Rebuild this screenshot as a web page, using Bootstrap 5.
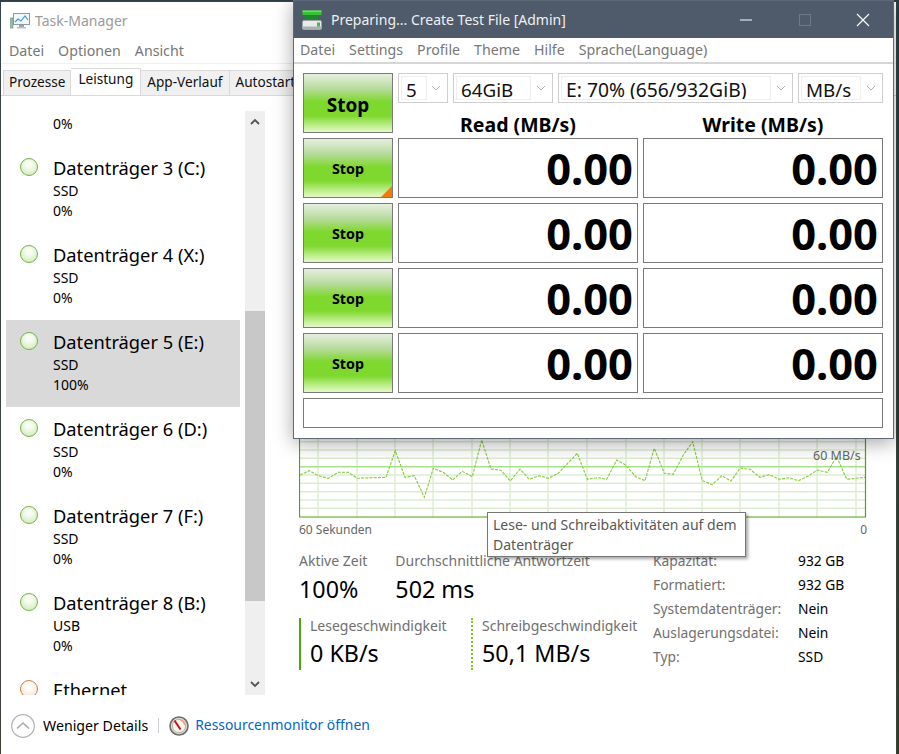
<!DOCTYPE html>
<html lang="de">
<head>
<meta charset="utf-8">
<title>Task-Manager</title>
<link href="https://cdn.jsdelivr.net/npm/bootstrap@5.3.0/dist/css/bootstrap.min.css" rel="stylesheet">
<style>
html,body{margin:0;height:100%;overflow:hidden}
body{font-family:"Noto Sans","Open Sans","Liberation Sans",sans-serif;font-size:14px;color:#000;background:#2b3a3c}
.desk{position:relative;width:899px;height:754px;overflow:hidden;background:linear-gradient(#2c3e44,#333a2c)}
.tm{position:absolute;left:1px;top:2px;width:895px;height:752px;background:#fff;display:flex;flex-direction:column;box-shadow:0 0 2px #555}
.tm-title{height:37px;flex:none;padding-left:9px;gap:4px;color:#9a9a9a;font-size:14px}
.tm-menu{height:24px;flex:none;padding-left:8px;gap:14px;color:#777;font-size:14.2px}
.tabbar{height:33px;flex:none;padding:3px 0 0 2px;border-top:1px solid #f0f0f0;border-bottom:1px solid #d9d9d9;background:#fff;align-items:flex-end;overflow:hidden}
.tabx{height:25px;background:#f0f0f0;border:1px solid #d9d9d9;border-bottom:0;border-left:0;padding:0 5px;line-height:22px;font-size:13.6px;white-space:nowrap;color:#111}
.tabx.first{border-left:1px solid #d9d9d9}
.tabx.on{height:28px;background:#fff;line-height:20px;padding:0 7px;margin-bottom:-1px;position:relative;border-left:0}
.tabx.wider{padding:0 7px 0 6px}
.mainrow{flex:1;min-height:0}
.side{width:265px;padding-top:15px;flex:none;display:flex}
.sidelist{width:244px;height:584px;overflow:hidden;flex:none;padding-left:5px}
.sidein{margin-top:-52px}
.disk{width:234px;height:87px;padding:10px 0 0 14px;display:flex;gap:15px}
.disk.sel{background:#d9d9d9}
.dot{width:18px;height:18px;border-radius:50%;flex:none;border:1.7px solid #74b44a;background:radial-gradient(circle at 50% 35%,#f8fdf4 20%,#c8e6ae 100%);margin-top:2px}
.dot.eth{border-color:#c9824f;background:radial-gradient(circle at 50% 35%,#fff 20%,#f9d9bf 100%)}
.dname{font-size:18.3px;line-height:25px;white-space:nowrap;margin:-1px 0 1px}
.dsub{font-size:14px;line-height:20px}
.scroll{width:20px;height:584px;background:#efefef;position:relative;flex:none}
.thumb{position:absolute;left:0;right:0;top:200px;height:290px;background:#c8c8c8}
.sarrow{position:absolute;left:5px;width:10px;height:8px}
.panel{flex:1;padding:334px 0 0 33px;min-width:0;position:relative}
.graph{display:block;width:568px;height:88px}
.gmax{position:absolute;left:547px;top:352px;font-size:12.5px;color:#666;line-height:16px}
.gaxis{width:568px;height:23px;font-size:12px;color:#666;padding-top:4px;line-height:16px}
.stats{width:568px;gap:0;margin-top:10px}
.lbl{font-size:14px;line-height:20px;color:#707070;white-space:nowrap}
.val{font-size:23.3px;line-height:35px;white-space:nowrap;color:#000}
.leftstats{width:354px}
.topstat{height:67px;gap:28px}
.topstat .val{margin-top:1px}
.speed{height:52px;gap:0}
.speed .lbl{margin-top:-2px}
.sp1{width:172px;border-left:2px solid #4da60c;padding-left:9px;height:52px;padding-top:0}
.sp2{border-left:2px dotted #7cc61e;padding-left:9px;height:52px}
.cap{font-size:13.8px;line-height:24px;margin-top:-2px}
.capk{width:145px;color:#707070;white-space:nowrap}
.foot{height:59px;flex:none;padding:2px 0 0 10px;font-size:14.2px;gap:0}
.sep{width:1px;height:15px;background:#ccc;margin:0 10px}
.rlink{color:#0066cc;margin-left:6px;text-decoration:none;font-size:13.9px}
.tipx{position:absolute;left:487px;top:512px;width:259px;height:45px;background:#fff;border:1px solid #767676;box-shadow:2px 2px 3px rgba(0,0,0,.35);padding:2px 5px;font-size:14px;line-height:20px;color:#575757;white-space:nowrap}
.cdm{position:absolute;left:293px;top:0;width:601px;height:439px;background:#fff;border:1px solid #5f6a78;box-shadow:0 4px 18px rgba(0,0,0,.35);display:flex;flex-direction:column}
.cdm-title{height:37px;background:#4f5b6a;color:#eef0f2;font-size:14px;padding-left:8px;gap:9px;flex:none}
.wbtns{margin-left:auto;display:flex;align-items:center;padding-right:1px}
.wbtn{width:58px;height:37px;display:flex;align-items:center;justify-content:center}
.wbtn.mn{margin-right:1px}
.cdm-menu{height:26px;flex:none;padding-left:6px;gap:14px;color:#777;font-size:14.2px;border-bottom:2px solid #d6d6d6}
.cdm-grid{display:grid;grid-template-columns:90px 240px 240px;gap:5px;padding:9px 0 0 9px}
.stopx{display:flex;align-items:center;justify-content:center;height:60px;font-weight:700;border:1px solid #7a7a7a;color:#000;position:relative;background:linear-gradient(#e6efe0 0,#b7db9c 25%,#7ed82e 48%,#7ed82e 72%,#c9f29c 92%,#e4f8c8 100%)}
.stopx.big{font-size:19px;padding-top:5px}
.stopx.tiny{font-size:14.3px;padding-top:1px}
.corner{position:absolute;right:0;bottom:0;width:0;height:0;border-style:solid;border-width:0 0 11px 11px;border-color:transparent transparent #f47a0a transparent}
.topright{grid-column:span 2;display:flex;flex-direction:column}
.sels{gap:5px;height:30px}
.selx{height:30px;border:1px solid #cfcfcf;padding:2px;display:flex;align-items:center;font-size:18.8px;color:#111}
.selx.wide{font-size:19.3px}
.selin{height:24px;border:1px solid #efefef;line-height:26px;padding-left:4px;white-space:nowrap;overflow:hidden}
.selch{flex:1;text-align:center;display:flex;justify-content:center}
.w5{width:50px}.w5 .selin{width:26px}
.w64{width:100px}.w64 .selin{width:75px}
.wE{width:235px}.wE .selin{width:210px}
.wMB{width:85px}.wMB .selin{width:60px}
.heads{height:30px;gap:5px;align-items:center}
.hd{width:240px;text-align:center;font-weight:700;font-size:19.5px;line-height:30px;padding-top:14px}
.num{height:60px;border:1px solid #7a7a7a;text-align:right;font-weight:700;font-size:43.5px;line-height:58px;padding-right:4px;color:#000}
.status{grid-column:span 3;height:30px;border:1px solid #7a7a7a}
</style>
</head>
<body>
<div class="desk">
  <div class="tm">
    <div class="tm-title d-flex align-items-center">
      <svg width="21" height="18" viewBox="0 0 21 18"><rect x="3.5" y="1.5" width="16" height="11" fill="#f2f7fb" stroke="#8a9aa8"/><path d="M5 10l3-3 3 2 4-5 3 4" fill="none" stroke="#3f9ad6" stroke-width="1.2"/><rect x="9" y="13" width="5" height="2" fill="#9aa5ad"/><rect x="7" y="15" width="9" height="1.5" fill="#b8c0c6"/><rect x="0.5" y="6" width="2.5" height="10" fill="#8fc89a" stroke="#7a8a80" stroke-width=".6"/></svg>
      <span>Task-Manager</span>
    </div>
    <div class="tm-menu d-flex align-items-center"><span>Datei</span><span>Optionen</span><span>Ansicht</span></div>
    <div class="tabbar d-flex">
      <div class="tabx first">Prozesse</div>
      <div class="tabx on">Leistung</div>
      <div class="tabx wider">App-Verlauf</div>
      <div class="tabx">Autostart</div>
    </div>
    <div class="mainrow d-flex">
      <div class="side">
        <div class="sidelist"><div class="sidein">
          <div class="disk"><div class="dot"></div><div><div class="dname">Datenträger 2 (G:)</div><div class="dsub">SSD</div><div class="dsub">0%</div></div></div>
          <div class="disk"><div class="dot"></div><div><div class="dname">Datenträger 3 (C:)</div><div class="dsub">SSD</div><div class="dsub">0%</div></div></div>
          <div class="disk"><div class="dot"></div><div><div class="dname">Datenträger 4 (X:)</div><div class="dsub">SSD</div><div class="dsub">0%</div></div></div>
          <div class="disk sel"><div class="dot"></div><div><div class="dname">Datenträger 5 (E:)</div><div class="dsub">SSD</div><div class="dsub">100%</div></div></div>
          <div class="disk"><div class="dot"></div><div><div class="dname">Datenträger 6 (D:)</div><div class="dsub">SSD</div><div class="dsub">0%</div></div></div>
          <div class="disk"><div class="dot"></div><div><div class="dname">Datenträger 7 (F:)</div><div class="dsub">SSD</div><div class="dsub">0%</div></div></div>
          <div class="disk"><div class="dot"></div><div><div class="dname">Datenträger 8 (B:)</div><div class="dsub">USB</div><div class="dsub">0%</div></div></div>
          <div class="disk"><div class="dot eth"></div><div><div class="dname">Ethernet</div></div></div>
        </div></div>
        <div class="scroll">
          <div class="thumb"></div>
          <svg class="sarrow" style="top:7px" viewBox="0 0 10 8"><path d="M1 6l4-4 4 4" fill="none" stroke="#555" stroke-width="1.8"/></svg>
          <svg class="sarrow" style="top:569px" viewBox="0 0 10 8"><path d="M1 2l4 4 4-4" fill="none" stroke="#555" stroke-width="1.8"/></svg>
        </div>
      </div>
      <div class="panel">
        <svg class="graph" viewBox="299 430 568 88">
          <g stroke="#dcedcf" stroke-width="1.4" fill="none">
            <path d="M300 441.7H866M300 450H866M300 458.3H866M300 475H866M300 483.3H866M300 491.7H866M300 500H866M300 508.3H866"/>
            <path d="M318 430V517M357 430V517M395 430V517M433 430V517M472 430V517M510 430V517M548 430V517M587 430V517M626 430V517M664 430V517M702 430V517M740 430V517M779 430V517M817 430V517M856 430V517"/>
          </g>
          <path d="M300 466.7H866" stroke="#a8e08c" stroke-width="1.5" fill="none"/>
          <polyline fill="none" stroke="#85cc3c" stroke-width="1.1" stroke-dasharray="3 1.2" points="300,475 309.3,470.7 318.3,475.7 328.3,478.3 338.3,472.3 348.3,472.3 357.3,478.3 386,477.3 395.3,450.7 405,477.3 414.3,475.7 424.3,497.3 433.3,468.3 443.3,472.3 452.7,480 462.3,471.3 472.3,476.7 481.7,440 491,469 501,470.3 510.3,481 520,469 529.3,479.3 539.3,475.7 548.3,478.3 558.3,473.3 567.7,463.3 577.3,453.3 587.3,479.3 597.3,477.7 606.7,479.3 616.7,460 625.7,465 635.7,476.7 645,480.7 654.3,448.3 664.3,473.3 673.3,474.3 683.3,455 692.7,441.7 702.3,480.7 712.3,484.7 721.7,475.7 731,481 740.3,468 750,469.3 760,477.3 769.3,474.7 779.3,479.3 789,477.7 798.3,480.7 808.3,476 817.3,470 827.3,472.3 836.7,456.7 846.7,479.3 855.7,478.3 865,477.3"/>
          <path d="M299.5 430V517H865.5V430" fill="none" stroke="#4da60c" stroke-width="1.2"/>
        </svg>
        <div class="gmax">60 MB/s</div>
        <div class="gaxis d-flex justify-content-between"><span>60 Sekunden</span><span>0</span></div>
        <div class="stats d-flex">
          <div class="leftstats">
            <div class="topstat d-flex">
              <div><div class="lbl">Aktive Zeit</div><div class="val">100%</div></div>
              <div><div class="lbl">Durchschnittliche Antwortzeit</div><div class="val">502 ms</div></div>
            </div>
            <div class="speed d-flex">
              <div class="sp1"><div class="lbl">Lesegeschwindigkeit</div><div class="val">0 KB/s</div></div>
              <div class="sp2"><div class="lbl">Schreibgeschwindigkeit</div><div class="val">50,1 MB/s</div></div>
            </div>
          </div>
          <div class="cap">
            <div class="d-flex"><div class="capk">Kapazität:</div><div>932 GB</div></div>
            <div class="d-flex"><div class="capk">Formatiert:</div><div>932 GB</div></div>
            <div class="d-flex"><div class="capk">Systemdatenträger:</div><div>Nein</div></div>
            <div class="d-flex"><div class="capk">Auslagerungsdatei:</div><div>Nein</div></div>
            <div class="d-flex"><div class="capk">Typ:</div><div>SSD</div></div>
          </div>
        </div>
      </div>
    </div>
    <div class="foot d-flex align-items-center">
      <svg width="24" height="24" viewBox="0 0 24 24" class="me-2"><circle cx="12" cy="12" r="11.3" fill="#fff" stroke="#b5b5b5" stroke-width="1.2"/><path d="M6 14.5l6-5.5 6 5.5" fill="none" stroke="#a8a8a8" stroke-width="1.6"/></svg>
      <span>Weniger Details</span>
      <span class="sep"></span>
      <svg width="20" height="20" viewBox="0 0 20 20"><circle cx="10" cy="10" r="9" fill="#dcdbd6" stroke="#6d6a63" stroke-width="1.6"/><circle cx="10" cy="10" r="6.6" fill="#f8f5ec" stroke="#a9a69c" stroke-width=".8"/><path d="M11.5 4.2A6 6 0 0 1 15.8 9" fill="none" stroke="#e9a878" stroke-width="1.6"/><path d="M5.5 4.5l6 9" stroke="#c8141c" stroke-width="2"/></svg>
      <a class="rlink" href="#">Ressourcenmonitor öffnen</a>
    </div>
  </div>

  <div class="tipx">Lese- und Schreibaktivitäten auf dem<br>Datenträger</div>

  <div class="cdm">
    <div class="cdm-title d-flex align-items-center">
      <svg width="20" height="20" viewBox="0 0 20 20"><rect x="0.5" y="0.5" width="19" height="4.5" fill="#38c038"/><rect x="0.5" y="0.5" width="19" height="1.5" fill="#6ede5e"/><rect x="2.5" y="5" width="14" height="5" fill="#1c8a2a"/><rect x="0.5" y="10.5" width="19" height="9" rx="1.2" fill="#e9ebea"/><rect x="0.5" y="16.5" width="19" height="3" rx="1" fill="#aab0b0"/><rect x="15" y="12.5" width="3" height="4" fill="#45b845"/></svg>
      <span>Preparing... Create Test File [Admin]</span>
      <div class="wbtns">
        <div class="wbtn mn"><svg width="12" height="2" viewBox="0 0 12 2"><path d="M0 1H12" stroke="#fff"/></svg></div>
        <div class="wbtn"><svg width="12" height="12" viewBox="0 0 12 12"><rect x=".5" y=".5" width="11" height="11" fill="none" stroke="#6f7a88"/></svg></div>
        <div class="wbtn"><svg width="14" height="14" viewBox="0 0 14 14"><path d="M1 1L13 13M13 1L1 13" stroke="#fff" stroke-width="1.1"/></svg></div>
      </div>
    </div>
    <div class="cdm-menu d-flex align-items-center"><span>Datei</span><span>Settings</span><span>Profile</span><span>Theme</span><span>Hilfe</span><span>Sprache(Language)</span></div>
    <div class="cdm-grid">
      <div class="stopx big">Stop</div>
      <div class="topright">
        <div class="sels d-flex">
          <div class="selx w5"><div class="selin">5</div><div class="selch"><svg width="10" height="6" viewBox="0 0 10 6"><path d="M1 1l4 4 4-4" fill="none" stroke="#b0b0b0"/></svg></div></div>
          <div class="selx w64"><div class="selin">64GiB</div><div class="selch"><svg width="10" height="6" viewBox="0 0 10 6"><path d="M1 1l4 4 4-4" fill="none" stroke="#b0b0b0"/></svg></div></div>
          <div class="selx wide wE"><div class="selin">E: 70% (656/932GiB)</div><div class="selch"><svg width="10" height="6" viewBox="0 0 10 6"><path d="M1 1l4 4 4-4" fill="none" stroke="#b0b0b0"/></svg></div></div>
          <div class="selx wMB"><div class="selin">MB/s</div><div class="selch"><svg width="10" height="6" viewBox="0 0 10 6"><path d="M1 1l4 4 4-4" fill="none" stroke="#b0b0b0"/></svg></div></div>
        </div>
        <div class="heads d-flex"><div class="hd">Read (MB/s)</div><div class="hd">Write (MB/s)</div></div>
      </div>
      <div class="stopx tiny">Stop<span class="corner"></span></div><div class="num">0.00</div><div class="num">0.00</div>
      <div class="stopx tiny">Stop</div><div class="num">0.00</div><div class="num">0.00</div>
      <div class="stopx tiny">Stop</div><div class="num">0.00</div><div class="num">0.00</div>
      <div class="stopx tiny">Stop</div><div class="num">0.00</div><div class="num">0.00</div>
      <div class="status"></div>
    </div>
  </div>
</div>
<script src="https://cdn.jsdelivr.net/npm/bootstrap@5.3.0/dist/js/bootstrap.bundle.min.js"></script>
</body>
</html>
